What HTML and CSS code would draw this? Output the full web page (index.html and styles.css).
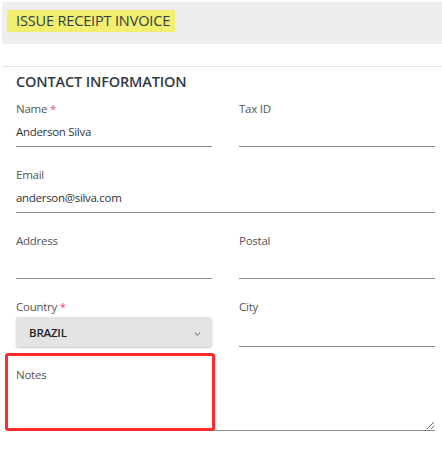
FILE: index.html
```html
<!DOCTYPE html>
<html>
<head>
<meta charset="utf-8">
<link rel="stylesheet" href="styles.css">
</head>
<body>
<div class="page">
  <div class="title-bar"><span class="title">ISSUE RECEIPT INVOICE</span></div>
  <div class="divider"></div>
  <div class="form">
    <h2 class="section">CONTACT INFORMATION</h2>
    <div class="grid">
      <div class="field">
        <div class="label">Name <span class="req">*</span></div>
        <div class="control">Anderson Silva</div>
      </div>
      <div class="field">
        <div class="label">Tax ID</div>
        <div class="control"></div>
      </div>
      <div class="field wide">
        <div class="label">Email</div>
        <div class="control">anderson@silva.com</div>
      </div>
      <div class="field">
        <div class="label">Address</div>
        <div class="control"></div>
      </div>
      <div class="field">
        <div class="label">Postal</div>
        <div class="control"></div>
      </div>
      <div class="field">
        <div class="label">Country <span class="req">*</span></div>
        <div class="select">
          <span>BRAZIL</span>
          <svg class="chev" width="7" height="4" viewBox="0 0 7 4"><path d="M0.8 0.6 L3.5 3.2 L6.2 0.6" fill="none" stroke="#555" stroke-width="1"/></svg>
        </div>
      </div>
      <div class="field">
        <div class="label">City</div>
        <div class="control tall"></div>
      </div>
      <div class="field wide notes">
        <div class="label">Notes</div>
        <textarea class="textarea"></textarea>
        <div class="highlight"></div>
      </div>
    </div>
  </div>
</div>
</body>
</html>
```
FILE: styles.css
```css
* { box-sizing: border-box; }
html, body { margin: 0; padding: 0; background: #fff; }
body { font-family: "Open Sans", "Liberation Sans", sans-serif; color: #333; }
.page { padding: 2px 0 0 2px; width: 442px; }
.title-bar { height: 42px; background: #eeeeee; padding: 7px 0 0 5px; }
.title {
  display: inline-block; height: 22px; line-height: 22px;
  background: #f1ee70; color: #2e4048; font-size: 14.5px;
  padding: 0 5px 0 9px; letter-spacing: -0.15px;
}
.divider { margin-top: 22px; height: 1px; background: #e2e2e2; }
.form { padding: 0 7px 0 14px; }
.section {
  margin: 5px 0 8px; font-size: 14.5px; line-height: 20px; font-weight: 600;
  color: #333a44; letter-spacing: -0.15px;
}
.grid { display: grid; grid-template-columns: 196px 196px; column-gap: 27px; row-gap: 19px; }
.field { position: relative; }
.wide { grid-column: 1 / span 2; }
.label { font-size: 11.5px; line-height: 18px; height: 18px; color: #555; letter-spacing: -0.25px; }
.req { color: #ec4a7c; }
.control {
  height: 29px; border-bottom: 1px solid #8c8c8c; font-size: 11.5px;
  line-height: 28px; color: #333; letter-spacing: -0.3px;
}
.control.tall { margin-top: 1px; height: 30px; }
.select {
  margin-top: 1px; height: 30px; background: #e4e4e4; border-radius: 3px;
  box-shadow: 0 1px 2px rgba(0,0,0,0.22);
  display: flex; align-items: center; justify-content: space-between;
  padding: 0 11px 0 13px; font-size: 11.5px; font-weight: 600; color: #222; letter-spacing: -0.2px;
}
.chev { margin-top: 3px; }
.textarea {
  display: block; width: 100%; height: 47px; border: 0; border-bottom: 1px solid #8c8c8c;
  padding: 0; margin: 0; outline: none; font: inherit; font-size: 12px; resize: vertical;
  background: transparent;
}
.highlight {
  position: absolute; left: -11px; top: -13px; width: 210px; height: 78px;
  border: 3px solid #ff2b2b; border-radius: 3px; pointer-events: none;
}
```
